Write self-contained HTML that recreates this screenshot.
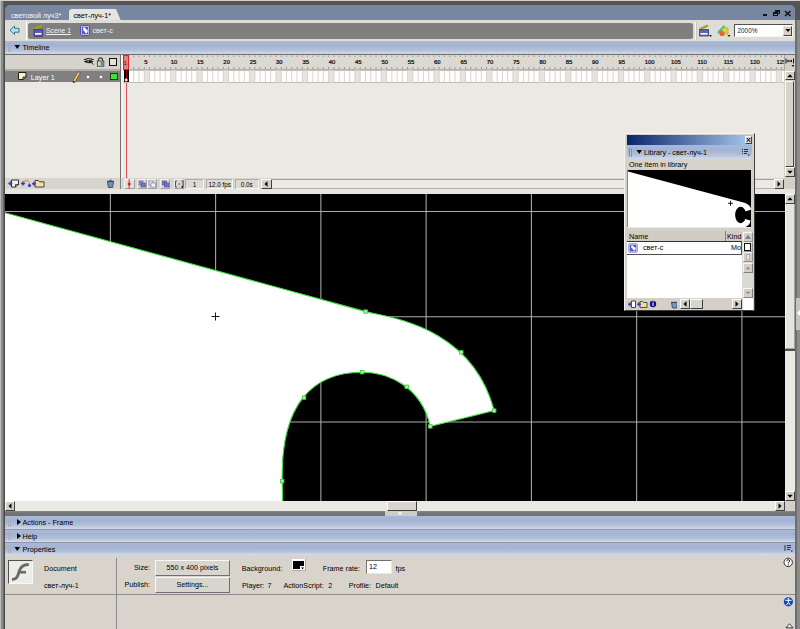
<!DOCTYPE html>
<html><head><meta charset="utf-8">
<style>
*{margin:0;padding:0;box-sizing:border-box}
html,body{width:800px;height:629px;overflow:hidden}
body{position:relative;background:#d4d0c8;font-family:"Liberation Sans",sans-serif;font-size:7.2px;color:#000}
.a{position:absolute}
.t{position:absolute;white-space:nowrap;line-height:10px}
.hdr{position:absolute;background:linear-gradient(#a8b8dc 0%,#a4b3d0 35%,#b2c0d8 70%,#d2dbe9 100%)}
.btn{position:absolute;background:#d4d0c8;border:1px solid;border-color:#fff #404040 #404040 #fff}
</style></head><body>
<div class="a" style="left:1px;top:1px;width:799px;height:628px;background:#555558"></div>
<div class="a" style="left:0px;top:1px;width:5px;height:628px;background:linear-gradient(90deg,#bcbcbc 0px,#bcbcbc 1px,#8c8c8c 1px,#8c8c8c 3px,#686868 3px,#686868 4.5px,#4c4c4c 4.5px)"></div>
<div class="a" style="left:795px;top:20px;width:5px;height:609px;background:linear-gradient(90deg,#6e6e6e 0px,#6e6e6e 2px,#8c8c8c 2px)"></div>
<div class="a" style="left:5px;top:5px;width:790px;height:16px;background:linear-gradient(#7888a0 0%,#7787a2 75%,#7a82ae 100%);border-radius:5px 5px 0 0"></div>
<div class="t" style="left:11px;top:10.7px;color:#f4f6fa">световой луч3*</div>
<div class="a" style="left:69px;top:9px;width:47px;height:12px;background:#e6e4de;border-radius:3px 0 0 0"></div>
<svg class="a" style="left:115px;top:9px" width="7" height="12"><polygon points="0,0 1,0 6,12 0,12" fill="#e6e4de"/></svg>
<div class="t" style="left:73.5px;top:10.7px;">свет-луч-1*</div>
<div class="a" style="left:763px;top:14px;width:4px;height:2px;background:#101010"></div>
<div class="a" style="left:775px;top:10px;width:5px;height:4px;border:1px solid #101010;border-top-width:2px"></div>
<div class="a" style="left:773px;top:12px;width:5px;height:4px;border:1px solid #101010;border-top-width:2px;background:#7a8aa2"></div>
<svg class="a" style="left:784px;top:10px" width="8" height="7"><path d="M1 1 L6.5 6 M6.5 1 L1 6" stroke="#101010" stroke-width="1.6"/></svg>
<div class="a" style="left:5px;top:20px;width:790px;height:21px;background:#dedcd6"></div>
<div class="a" style="left:26px;top:21px;width:1px;height:19px;background:#fff"></div>
<div class="a" style="left:28px;top:23px;width:665px;height:16px;background:#7f7f7f;border-radius:2.5px"></div>
<div class="t" style="left:46px;top:26.3px;color:#f0f0f0;text-decoration:underline;font-size:6.8px">Scene 1</div>
<div class="t" style="left:92.5px;top:26.3px;color:#f0f0f0">свет-с</div>
<div class="a" style="left:694.5px;top:22px;width:1px;height:18px;background:#f4f4f0"></div>
<div class="a" style="left:695.5px;top:22px;width:0.8px;height:18px;background:#c8c6c0"></div>
<svg class="a" style="left:9px;top:25px" width="12" height="11"><path d="M1 5.2 L5.5 1 L5.5 3.3 L10 3.3 L10 7.2 L5.5 7.2 L5.5 9.5 Z" fill="#a8e4f8" stroke="#2a6a80" stroke-width="0.9" stroke-linejoin="round"/></svg>
<svg class="a" style="left:33px;top:24px" width="11" height="14"><path d="M1 5 L9 1.5" stroke="#a0a020" stroke-width="2.2"/><rect x="1" y="5.5" width="8.5" height="7" fill="#5a58a8" stroke="#383878" stroke-width="0.8"/><rect x="2" y="9" width="6.5" height="1.6" fill="#fff"/></svg>
<svg class="a" style="left:80px;top:25px" width="10" height="11"><rect x="0.5" y="0.5" width="9" height="10" rx="1.2" fill="#b8b8f4" stroke="#4848b0" stroke-width="0.9"/><rect x="2" y="2" width="6" height="7" fill="#5858c8"/><path d="M3 2.6H5L6 4.2L7.6 4.8V6.8L6.6 8.2H5.6L4.6 6.4L3.4 5.4Z" fill="#fff"/></svg>
<svg class="a" style="left:698px;top:24px" width="15" height="14"><path d="M2 5 L10 1.5" stroke="#a0a020" stroke-width="2.2"/><rect x="1.5" y="5.5" width="9" height="6.5" fill="#6060b0" stroke="#404080" stroke-width="0.8"/><rect x="2.5" y="9" width="7" height="1.6" fill="#fff"/><path d="M11 11 L14 11 L12.5 13 Z" fill="#222"/></svg>
<svg class="a" style="left:716px;top:24px" width="15" height="14"><path d="M2 9 L8.5 2" stroke="#30c0a0" stroke-width="2.4"/><rect x="6" y="4" width="6" height="6" fill="#e0d830" stroke="#a0a020" stroke-width="0.6"/><circle cx="6" cy="9.5" r="2.6" fill="#f06030"/><path d="M11.5 11 L14.5 11 L13 13 Z" fill="#222"/></svg>
<div class="a" style="left:734px;top:24px;width:59px;height:12.5px;background:#fff;border:1.5px solid;border-color:#505050 #f4f4f0 #f4f4f0 #505050"></div>
<div class="t" style="left:737.5px;top:25.6px;font-size:6.4px;color:#202020">2000%</div>
<div class="btn" style="left:782.5px;top:25.5px;width:9.5px;height:10px;border-color:#e8e8e4 #404040 #404040 #e8e8e4"></div>
<svg class="a" style="left:783px;top:25px" width="10" height="11"><path d="M2.5 4 L7.5 4 L5 7 Z" fill="#000"/></svg>
<div class="hdr" style="left:5px;top:41px;width:790px;height:13px"></div>
<div class="a" style="left:8px;top:43px;width:1px;height:9px;background:#a6aec4"></div>
<div class="a" style="left:10px;top:43px;width:1px;height:9px;background:#a6aec4"></div>
<svg class="a" style="left:14px;top:44px" width="7" height="6"><path d="M0.5 1 L6 1 L3.25 5 Z" fill="#000"/></svg>
<div class="t" style="left:22.5px;top:42.9px;">Timeline</div>
<div class="a" style="left:5px;top:54px;width:790px;height:1px;background:#6d6d6d"></div>
<div class="a" style="left:5px;top:55px;width:115px;height:15px;background:#d6d3cc"></div>
<div class="a" style="left:5px;top:70px;width:115px;height:12px;background:#808080"></div>
<div class="t" style="left:30.8px;top:72.8px;color:#fff">Layer 1</div>
<div class="a" style="left:5px;top:82px;width:115px;height:96px;background:#ebe9e4"></div>
<div class="a" style="left:120px;top:55px;width:1px;height:134px;background:#707070"></div>
<svg class="a" style="left:121px;top:55px" width="662.6" height="28" viewBox="121 55 662.6 28"><rect x="121" y="55" width="664" height="14.5" fill="#dcd9d2"/><rect x="121" y="69" width="664" height="1.5" fill="#b4b2ac"/><rect x="121" y="70.5" width="664" height="12" fill="#fdfdfc"/><g fill="#e6e4df"><rect x="144.27" y="70.5" width="5.27" height="12"/><rect x="170.60" y="70.5" width="5.27" height="12"/><rect x="196.94" y="70.5" width="5.27" height="12"/><rect x="223.27" y="70.5" width="5.27" height="12"/><rect x="249.61" y="70.5" width="5.27" height="12"/><rect x="275.94" y="70.5" width="5.27" height="12"/><rect x="302.28" y="70.5" width="5.27" height="12"/><rect x="328.61" y="70.5" width="5.27" height="12"/><rect x="354.95" y="70.5" width="5.27" height="12"/><rect x="381.28" y="70.5" width="5.27" height="12"/><rect x="407.62" y="70.5" width="5.27" height="12"/><rect x="433.95" y="70.5" width="5.27" height="12"/><rect x="460.29" y="70.5" width="5.27" height="12"/><rect x="486.62" y="70.5" width="5.27" height="12"/><rect x="512.96" y="70.5" width="5.27" height="12"/><rect x="539.29" y="70.5" width="5.27" height="12"/><rect x="565.63" y="70.5" width="5.27" height="12"/><rect x="591.96" y="70.5" width="5.27" height="12"/><rect x="618.30" y="70.5" width="5.27" height="12"/><rect x="644.63" y="70.5" width="5.27" height="12"/><rect x="670.97" y="70.5" width="5.27" height="12"/><rect x="697.30" y="70.5" width="5.27" height="12"/><rect x="723.64" y="70.5" width="5.27" height="12"/><rect x="749.97" y="70.5" width="5.27" height="12"/><rect x="776.31" y="70.5" width="5.27" height="12"/></g><path d="M128.47 70.5V82.5M133.73 70.5V82.5M139.00 70.5V82.5M144.27 70.5V82.5M149.53 70.5V82.5M154.80 70.5V82.5M160.07 70.5V82.5M165.34 70.5V82.5M170.60 70.5V82.5M175.87 70.5V82.5M181.14 70.5V82.5M186.40 70.5V82.5M191.67 70.5V82.5M196.94 70.5V82.5M202.21 70.5V82.5M207.47 70.5V82.5M212.74 70.5V82.5M218.01 70.5V82.5M223.27 70.5V82.5M228.54 70.5V82.5M233.81 70.5V82.5M239.07 70.5V82.5M244.34 70.5V82.5M249.61 70.5V82.5M254.88 70.5V82.5M260.14 70.5V82.5M265.41 70.5V82.5M270.68 70.5V82.5M275.94 70.5V82.5M281.21 70.5V82.5M286.48 70.5V82.5M291.74 70.5V82.5M297.01 70.5V82.5M302.28 70.5V82.5M307.55 70.5V82.5M312.81 70.5V82.5M318.08 70.5V82.5M323.35 70.5V82.5M328.61 70.5V82.5M333.88 70.5V82.5M339.15 70.5V82.5M344.41 70.5V82.5M349.68 70.5V82.5M354.95 70.5V82.5M360.22 70.5V82.5M365.48 70.5V82.5M370.75 70.5V82.5M376.02 70.5V82.5M381.28 70.5V82.5M386.55 70.5V82.5M391.82 70.5V82.5M397.08 70.5V82.5M402.35 70.5V82.5M407.62 70.5V82.5M412.88 70.5V82.5M418.15 70.5V82.5M423.42 70.5V82.5M428.69 70.5V82.5M433.95 70.5V82.5M439.22 70.5V82.5M444.49 70.5V82.5M449.75 70.5V82.5M455.02 70.5V82.5M460.29 70.5V82.5M465.56 70.5V82.5M470.82 70.5V82.5M476.09 70.5V82.5M481.36 70.5V82.5M486.62 70.5V82.5M491.89 70.5V82.5M497.16 70.5V82.5M502.42 70.5V82.5M507.69 70.5V82.5M512.96 70.5V82.5M518.23 70.5V82.5M523.49 70.5V82.5M528.76 70.5V82.5M534.03 70.5V82.5M539.29 70.5V82.5M544.56 70.5V82.5M549.83 70.5V82.5M555.09 70.5V82.5M560.36 70.5V82.5M565.63 70.5V82.5M570.90 70.5V82.5M576.16 70.5V82.5M581.43 70.5V82.5M586.70 70.5V82.5M591.96 70.5V82.5M597.23 70.5V82.5M602.50 70.5V82.5M607.76 70.5V82.5M613.03 70.5V82.5M618.30 70.5V82.5M623.57 70.5V82.5M628.83 70.5V82.5M634.10 70.5V82.5M639.37 70.5V82.5M644.63 70.5V82.5M649.90 70.5V82.5M655.17 70.5V82.5M660.43 70.5V82.5M665.70 70.5V82.5M670.97 70.5V82.5M676.24 70.5V82.5M681.50 70.5V82.5M686.77 70.5V82.5M692.04 70.5V82.5M697.30 70.5V82.5M702.57 70.5V82.5M707.84 70.5V82.5M713.10 70.5V82.5M718.37 70.5V82.5M723.64 70.5V82.5M728.91 70.5V82.5M734.17 70.5V82.5M739.44 70.5V82.5M744.71 70.5V82.5M749.97 70.5V82.5M755.24 70.5V82.5M760.51 70.5V82.5M765.77 70.5V82.5M771.04 70.5V82.5M776.31 70.5V82.5M781.58 70.5V82.5" stroke="#cfcdc7" stroke-width="0.8"/><path d="M128.47 55.5V57M128.47 67V69M133.73 55.5V57M133.73 67V69M139.00 55.5V57M139.00 67V69M144.27 55.5V57M144.27 67V69M149.53 55.5V57M149.53 67V69M154.80 55.5V57M154.80 67V69M160.07 55.5V57M160.07 67V69M165.34 55.5V57M165.34 67V69M170.60 55.5V57M170.60 67V69M175.87 55.5V57M175.87 67V69M181.14 55.5V57M181.14 67V69M186.40 55.5V57M186.40 67V69M191.67 55.5V57M191.67 67V69M196.94 55.5V57M196.94 67V69M202.21 55.5V57M202.21 67V69M207.47 55.5V57M207.47 67V69M212.74 55.5V57M212.74 67V69M218.01 55.5V57M218.01 67V69M223.27 55.5V57M223.27 67V69M228.54 55.5V57M228.54 67V69M233.81 55.5V57M233.81 67V69M239.07 55.5V57M239.07 67V69M244.34 55.5V57M244.34 67V69M249.61 55.5V57M249.61 67V69M254.88 55.5V57M254.88 67V69M260.14 55.5V57M260.14 67V69M265.41 55.5V57M265.41 67V69M270.68 55.5V57M270.68 67V69M275.94 55.5V57M275.94 67V69M281.21 55.5V57M281.21 67V69M286.48 55.5V57M286.48 67V69M291.74 55.5V57M291.74 67V69M297.01 55.5V57M297.01 67V69M302.28 55.5V57M302.28 67V69M307.55 55.5V57M307.55 67V69M312.81 55.5V57M312.81 67V69M318.08 55.5V57M318.08 67V69M323.35 55.5V57M323.35 67V69M328.61 55.5V57M328.61 67V69M333.88 55.5V57M333.88 67V69M339.15 55.5V57M339.15 67V69M344.41 55.5V57M344.41 67V69M349.68 55.5V57M349.68 67V69M354.95 55.5V57M354.95 67V69M360.22 55.5V57M360.22 67V69M365.48 55.5V57M365.48 67V69M370.75 55.5V57M370.75 67V69M376.02 55.5V57M376.02 67V69M381.28 55.5V57M381.28 67V69M386.55 55.5V57M386.55 67V69M391.82 55.5V57M391.82 67V69M397.08 55.5V57M397.08 67V69M402.35 55.5V57M402.35 67V69M407.62 55.5V57M407.62 67V69M412.88 55.5V57M412.88 67V69M418.15 55.5V57M418.15 67V69M423.42 55.5V57M423.42 67V69M428.69 55.5V57M428.69 67V69M433.95 55.5V57M433.95 67V69M439.22 55.5V57M439.22 67V69M444.49 55.5V57M444.49 67V69M449.75 55.5V57M449.75 67V69M455.02 55.5V57M455.02 67V69M460.29 55.5V57M460.29 67V69M465.56 55.5V57M465.56 67V69M470.82 55.5V57M470.82 67V69M476.09 55.5V57M476.09 67V69M481.36 55.5V57M481.36 67V69M486.62 55.5V57M486.62 67V69M491.89 55.5V57M491.89 67V69M497.16 55.5V57M497.16 67V69M502.42 55.5V57M502.42 67V69M507.69 55.5V57M507.69 67V69M512.96 55.5V57M512.96 67V69M518.23 55.5V57M518.23 67V69M523.49 55.5V57M523.49 67V69M528.76 55.5V57M528.76 67V69M534.03 55.5V57M534.03 67V69M539.29 55.5V57M539.29 67V69M544.56 55.5V57M544.56 67V69M549.83 55.5V57M549.83 67V69M555.09 55.5V57M555.09 67V69M560.36 55.5V57M560.36 67V69M565.63 55.5V57M565.63 67V69M570.90 55.5V57M570.90 67V69M576.16 55.5V57M576.16 67V69M581.43 55.5V57M581.43 67V69M586.70 55.5V57M586.70 67V69M591.96 55.5V57M591.96 67V69M597.23 55.5V57M597.23 67V69M602.50 55.5V57M602.50 67V69M607.76 55.5V57M607.76 67V69M613.03 55.5V57M613.03 67V69M618.30 55.5V57M618.30 67V69M623.57 55.5V57M623.57 67V69M628.83 55.5V57M628.83 67V69M634.10 55.5V57M634.10 67V69M639.37 55.5V57M639.37 67V69M644.63 55.5V57M644.63 67V69M649.90 55.5V57M649.90 67V69M655.17 55.5V57M655.17 67V69M660.43 55.5V57M660.43 67V69M665.70 55.5V57M665.70 67V69M670.97 55.5V57M670.97 67V69M676.24 55.5V57M676.24 67V69M681.50 55.5V57M681.50 67V69M686.77 55.5V57M686.77 67V69M692.04 55.5V57M692.04 67V69M697.30 55.5V57M697.30 67V69M702.57 55.5V57M702.57 67V69M707.84 55.5V57M707.84 67V69M713.10 55.5V57M713.10 67V69M718.37 55.5V57M718.37 67V69M723.64 55.5V57M723.64 67V69M728.91 55.5V57M728.91 67V69M734.17 55.5V57M734.17 67V69M739.44 55.5V57M739.44 67V69M744.71 55.5V57M744.71 67V69M749.97 55.5V57M749.97 67V69M755.24 55.5V57M755.24 67V69M760.51 55.5V57M760.51 67V69M765.77 55.5V57M765.77 67V69M771.04 55.5V57M771.04 67V69M776.31 55.5V57M776.31 67V69M781.58 55.5V57M781.58 67V69" stroke="#8a8882" stroke-width="0.8"/><rect x="121" y="82.5" width="664" height="0.6" fill="#d0cec8"/><g font-family="Liberation Sans" font-size="5.9" fill="#101010" stroke="#101010" stroke-width="0.25"><text x="144.37" y="64.4">5</text><text x="170.70" y="64.4">10</text><text x="197.04" y="64.4">15</text><text x="223.37" y="64.4">20</text><text x="249.71" y="64.4">25</text><text x="276.04" y="64.4">30</text><text x="302.38" y="64.4">35</text><text x="328.71" y="64.4">40</text><text x="355.05" y="64.4">45</text><text x="381.38" y="64.4">50</text><text x="407.72" y="64.4">55</text><text x="434.05" y="64.4">60</text><text x="460.39" y="64.4">65</text><text x="486.72" y="64.4">70</text><text x="513.06" y="64.4">75</text><text x="539.39" y="64.4">80</text><text x="565.73" y="64.4">85</text><text x="592.06" y="64.4">90</text><text x="618.40" y="64.4">95</text><text x="644.73" y="64.4">100</text><text x="671.07" y="64.4">105</text><text x="697.40" y="64.4">110</text><text x="723.74" y="64.4">115</text><text x="750.07" y="64.4">120</text><text x="776.41" y="64.4">125</text></g></svg>
<div class="a" style="left:121px;top:83px;width:664px;height:95px;background:#ebe9e4"></div>
<div class="a" style="left:5px;top:69px;width:115px;height:1.5px;background:#b0aea8"></div>
<svg class="a" style="left:83px;top:57px" width="12" height="9"><path d="M0.8 2.8 Q5 0.2 10.8 2.6" stroke="#111" stroke-width="1" fill="none"/><path d="M0.8 4.6 Q5.5 1.4 10.6 4.4 Q6 8 0.8 4.6 Z" fill="#151515"/><circle cx="5.2" cy="4.4" r="1" fill="#888"/><path d="M8.6 5.6 L10.4 7.6" stroke="#111" stroke-width="1"/></svg>
<svg class="a" style="left:96px;top:56px" width="9" height="11"><path d="M2.5 5 V3 Q4.5 0.8 6.5 3 V5" stroke="#333" stroke-width="1.1" fill="none"/><rect x="1.3" y="5" width="6.5" height="5.2" fill="#d8e0a0" stroke="#303040" stroke-width="0.8"/><rect x="4.5" y="5.6" width="2.8" height="4" fill="#6a8ac0"/></svg>
<div class="a" style="left:109px;top:58px;width:8px;height:8px;border:1.6px solid #111;background:#e4e2dc"></div>
<svg class="a" style="left:17px;top:71px" width="11" height="10"><path d="M1.5 1.5 H9 V6 L6 8.5 H1.5 Z" fill="#f4f4d8" stroke="#202010" stroke-width="1"/><path d="M6 8.5 V6 H9" stroke="#202010" stroke-width="0.9" fill="none"/></svg>
<svg class="a" style="left:72px;top:71px" width="9" height="12"><path d="M2 10.5 L7 2" stroke="#7a3a80" stroke-width="3" stroke-linecap="round"/><path d="M2.2 10 L6.6 2.5" stroke="#f0e020" stroke-width="1.6"/><path d="M6.2 3.2 L7.2 1.5" stroke="#f0b0c0" stroke-width="1.5"/><path d="M1.4 11.2 L2 10" stroke="#333" stroke-width="1"/></svg>
<svg class="a" style="left:86px;top:75px" width="4" height="4"><circle cx="2" cy="2" r="1.3" fill="#fff"/></svg>
<svg class="a" style="left:98.5px;top:75px" width="4" height="4"><circle cx="2" cy="2" r="1.3" fill="#fff"/></svg>
<div class="a" style="left:110px;top:73px;width:7.5px;height:7px;background:#40e040;border:1px solid #104010"></div>
<div class="a" style="left:121px;top:55px;width:1.5px;height:134px;background:#f4f2ee"></div>
<div class="a" style="left:123px;top:55px;width:6px;height:15px;background:#f07a7a;border:1px solid #e02020"></div>
<div class="t" style="left:123.6px;top:57.5px;font-size:6px;color:#301010">1</div>
<div class="a" style="left:123.6px;top:70.4px;width:5px;height:12px;background:#000"></div>
<div class="a" style="left:126px;top:70.4px;width:1px;height:12px;background:#900"></div>
<svg class="a" style="left:124px;top:77.5px" width="5" height="5"><circle cx="2.2" cy="2" r="1.4" fill="#fff" stroke="#e06060" stroke-width="0.5"/></svg>
<div class="a" style="left:125.8px;top:82.5px;width:1px;height:96px;background:#e05050"></div>
<div class="a" style="left:784px;top:55px;width:11px;height:134px;background:#d4d0c8"></div>
<div class="a" style="left:783.5px;top:55px;width:0.8px;height:15px;background:#a8a6a0"></div>
<svg class="a" style="left:785px;top:57px" width="10" height="11"><path d="M1 1.5V6.5M8.5 1.5V6.5M2.5 4H7" stroke="#111" stroke-width="1"/><path d="M2.5 2.5L4 4L2.5 5.5ZM7 2.5L5.5 4L7 5.5Z" fill="#111"/><path d="M6.5 8L9.5 8L8 10Z" fill="#111"/></svg>
<div class="btn" style="left:784.5px;top:70.5px;width:10px;height:9.5px;"></div>
<svg class="a" style="left:784.5px;top:70.5px" width="10" height="10"><path d="M2.3 6.3H7.7L5 3.3Z" fill="#000"/></svg>
<div class="btn" style="left:784.5px;top:80.5px;width:9px;height:86px;background:#d6d3cc"></div>
<div class="btn" style="left:784.5px;top:167px;width:10px;height:10px;"></div>
<svg class="a" style="left:784.5px;top:167px" width="10" height="10"><path d="M2.3 3.7H7.7L5 6.7Z" fill="#000"/></svg>
<div class="a" style="left:5px;top:178px;width:790px;height:11px;background:#d8d5ce"></div>
<div class="a" style="left:5px;top:189px;width:790px;height:4.5px;background:#e8e6e0"></div>
<div class="a" style="left:120px;top:178px;width:1px;height:11px;background:#808080"></div>
<svg class="a" style="left:7px;top:178px" width="40" height="11"><path d="M4.5 2H11.5V6.5L8.5 9H4.5Z" fill="#f0f0dc" stroke="#222" stroke-width="0.9"/><path d="M8.5 9V6.5H11.5" stroke="#222" stroke-width="0.8" fill="none"/><path d="M1.3 5.5H5.3M3.3 3.5V7.5" stroke="#4040c0" stroke-width="1.5"/><path d="M14 5.5H18M16 3.5V7.5" stroke="#3838b8" stroke-width="1.5"/><path d="M17.5 4 Q20.5 -0.5 22.5 6" stroke="#e02020" stroke-width="1" stroke-dasharray="1 0.8" fill="none"/><circle cx="22.5" cy="7.5" r="1.6" fill="#2040c0"/><path d="M28 2.5H31.5L32.5 3.8H37V9H28Z" fill="#f0e0a0" stroke="#333" stroke-width="0.9"/><path d="M25 5.8H29M27 3.8V7.8" stroke="#4040c0" stroke-width="1.5"/></svg>
<svg class="a" style="left:106px;top:179px" width="9" height="9"><path d="M1.5 2.5H7.5L6.6 8.5H2.4Z" fill="#6a90c0" stroke="#304060" stroke-width="0.8"/><path d="M1 2.3H8M3.3 1.2H5.7" stroke="#304060" stroke-width="0.9"/></svg>
<div class="btn" style="left:124px;top:178.5px;width:10.5px;height:10px;background:#e2e0da;border-color:#f4f4f0 #a0a0a0 #a0a0a0 #f4f4f0"></div>
<svg class="a" style="left:124px;top:178.5px" width="11" height="10"><path d="M5.2 0V10" stroke="#e02020" stroke-width="0.9"/><path d="M5.2 3L7 5L5.2 7L3.4 5Z" fill="#e02020"/></svg>
<div class="btn" style="left:136.5px;top:178.5px;width:10px;height:10px;background:#d8d5ce;border-color:#f0f0ec #a0a0a0 #a0a0a0 #f0f0ec"></div>
<div class="btn" style="left:146.5px;top:178.5px;width:10px;height:10px;background:#d8d5ce;border-color:#f0f0ec #a0a0a0 #a0a0a0 #f0f0ec"></div>
<div class="btn" style="left:160px;top:178.5px;width:10px;height:10px;background:#d8d5ce;border-color:#f0f0ec #a0a0a0 #a0a0a0 #f0f0ec"></div>
<div class="btn" style="left:173.5px;top:178.5px;width:10px;height:10px;background:#d8d5ce;border-color:#f0f0ec #a0a0a0 #a0a0a0 #f0f0ec"></div>
<svg class="a" style="left:136.5px;top:178.5px" width="48" height="10"><rect x="2" y="2" width="4" height="4" fill="#9090d8" stroke="#6060b0" stroke-width="0.6"/><rect x="4" y="4" width="4.5" height="4" fill="#7070c8" stroke="#5050a0" stroke-width="0.6"/><rect x="12" y="2" width="4" height="4" fill="#e8e8f8" stroke="#8080c0" stroke-width="0.7"/><rect x="14" y="4" width="4.5" height="4" fill="#f4f4ff" stroke="#8080c0" stroke-width="0.7"/><rect x="25.5" y="2" width="4" height="4" fill="#7070c8" stroke="#5050a0" stroke-width="0.6"/><rect x="27.5" y="4" width="4.5" height="4" fill="#7070c8" stroke="#5050a0" stroke-width="0.6"/><path d="M40 2H38.5V8H40M44.5 2H46V8H44.5" stroke="#404060" stroke-width="0.9" fill="none"/><circle cx="42.2" cy="5" r="0.7" fill="#404060"/><path d="M44 7.5L46 7.5L46 9.5Z" fill="#000"/></svg>
<div class="a" style="left:185px;top:178.5px;width:19px;height:10px;background:#dcdad4;border:1px solid;border-color:#b0aea8 #f4f4f0 #f4f4f0 #b0aea8"></div>
<div class="t" style="left:185px;top:179.8px;width:19px;text-align:center;font-size:6.4px">1</div>
<div class="a" style="left:206px;top:178.5px;width:27px;height:10px;background:#dcdad4;border:1px solid;border-color:#b0aea8 #f4f4f0 #f4f4f0 #b0aea8"></div>
<div class="t" style="left:208.6px;top:179.8px;font-size:6.3px">12.0 fps</div>
<div class="a" style="left:235px;top:178.5px;width:23.5px;height:10px;background:#dcdad4;border:1px solid;border-color:#b0aea8 #f4f4f0 #f4f4f0 #b0aea8"></div>
<div class="t" style="left:240.7px;top:179.8px;font-size:6.3px">0.0s</div>
<div class="btn" style="left:261px;top:178.5px;width:10.5px;height:10px;"></div>
<svg class="a" style="left:261px;top:178.5px" width="10" height="10"><path d="M6.5 2.3V7.7L3.5 5Z" fill="#000"/></svg>
<div class="a" style="left:271.5px;top:178.5px;width:502px;height:10.5px;background:#ebe9e5;border-top:1px solid #a4a29c;border-bottom:1px solid #b4b2ac"></div>
<div class="btn" style="left:773.5px;top:178.5px;width:10.5px;height:10px;"></div>
<svg class="a" style="left:773.5px;top:178.5px" width="10" height="10"><path d="M3.5 2.3V7.7L6.5 5Z" fill="#000"/></svg>
<div class="a" style="left:784px;top:178px;width:11px;height:11px;background:#d4d0c8"></div>
<svg class="a" style="left:5px;top:194px" width="780" height="307" viewBox="5 194 780 307"><rect x="5" y="194" width="780" height="307" fill="#000"/><path d="M110.35 194V501M215.61 194V501M320.87 194V501M426.13 194V501M531.39 194V501M636.65 194V501M741.91 194V501M5 211.50H785M5 316.76H785M5 422.02H785" stroke="#acacac" stroke-width="1.05"/><path d="M 0 211.4 L 365.6 311.6 C 386.3 317.3 471.3 324.5 494.2 410.6 L 430.3 426.4 C 421.4 386.5 387.85 372.2 362.2 372.2 C 312.5 372.2 280.75 403.9 282.2 481.1 L 282.7 510 L 0 510 Z" fill="#fff" stroke="#40e040" stroke-width="1.15"/><path d="M211.5 316.5H219.5M215.5 312.5V320.5" stroke="#000" stroke-width="0.9"/><rect x="363.90000000000003" y="309.90000000000003" width="3.4" height="3.4" fill="#b8f0b8" stroke="#40d040" stroke-width="0.9"/><rect x="459.6" y="350.6" width="3.4" height="3.4" fill="#b8f0b8" stroke="#40d040" stroke-width="0.9"/><rect x="492.5" y="408.90000000000003" width="3.4" height="3.4" fill="#b8f0b8" stroke="#40d040" stroke-width="0.9"/><rect x="428.6" y="424.7" width="3.4" height="3.4" fill="#b8f0b8" stroke="#40d040" stroke-width="0.9"/><rect x="405.0" y="385.1" width="3.4" height="3.4" fill="#b8f0b8" stroke="#40d040" stroke-width="0.9"/><rect x="360.5" y="370.5" width="3.4" height="3.4" fill="#b8f0b8" stroke="#40d040" stroke-width="0.9"/><rect x="302.40000000000003" y="395.90000000000003" width="3.4" height="3.4" fill="#b8f0b8" stroke="#40d040" stroke-width="0.9"/><rect x="280.5" y="479.40000000000003" width="3.4" height="3.4" fill="#b8f0b8" stroke="#40d040" stroke-width="0.9"/></svg>
<div class="a" style="left:785px;top:194px;width:10px;height:307px;background:#ebe9e4"></div>
<div class="a" style="left:5px;top:500.5px;width:790px;height:10.5px;background:#ebe9e4"></div>
<div class="btn" style="left:785px;top:194px;width:10px;height:10px;"></div>
<svg class="a" style="left:785px;top:194px" width="10" height="10"><path d="M2.3 6.3H7.7L5 3.3Z" fill="#000"/></svg>
<div class="a" style="left:785px;top:204px;width:10px;height:145px;background:#e6e4de;border-left:1px solid #fafaf8;border-right:1px solid #a0a0a0;border-bottom:1px solid #a0a0a0"></div>
<div class="a" style="left:785px;top:349px;width:10px;height:1.5px;background:#505050"></div>
<div class="a" style="left:795.5px;top:298px;width:4.5px;height:32px;background:#c4c4c4"></div>
<svg class="a" style="left:795.5px;top:308px" width="5" height="10"><path d="M4 2V8L1 5Z" fill="#fff"/></svg>
<div class="btn" style="left:785px;top:490.5px;width:10px;height:10px;"></div>
<svg class="a" style="left:785px;top:490.5px" width="10" height="10"><path d="M2.3 3.7H7.7L5 6.7Z" fill="#000"/></svg>
<div class="btn" style="left:5px;top:500.5px;width:10px;height:10.5px;"></div>
<svg class="a" style="left:5px;top:500.5px" width="10" height="10"><path d="M6.5 2.3V7.7L3.5 5Z" fill="#000"/></svg>
<div class="btn" style="left:775px;top:500.5px;width:10px;height:10.5px;"></div>
<svg class="a" style="left:775px;top:500.5px" width="10" height="10"><path d="M3.5 2.3V7.7L6.5 5Z" fill="#000"/></svg>
<div class="btn" style="left:386.5px;top:500.5px;width:30px;height:10.5px;background:#d8d5ce"></div>
<div class="a" style="left:785px;top:500.5px;width:10px;height:10.5px;background:#d4d0c8"></div>
<div class="a" style="left:5px;top:511px;width:790px;height:5px;background:linear-gradient(#8a8a8a,#747474 40%,#707070)"></div>
<div class="a" style="left:385px;top:511px;width:32px;height:5px;background:#cfcdc8"></div>
<svg class="a" style="left:396px;top:512px" width="8" height="4"><path d="M1.5 0.5H6.5L4 3Z" fill="#fff"/></svg>
<div class="hdr" style="left:5px;top:516px;width:790px;height:13px"></div>
<div class="a" style="left:8px;top:518px;width:1px;height:9px;background:#a6aec4"></div>
<div class="a" style="left:10px;top:518px;width:1px;height:9px;background:#a6aec4"></div>
<svg class="a" style="left:16px;top:518px" width="6" height="8"><path d="M1 1 L5 4 L1 7 Z" fill="#000"/></svg>
<div class="t" style="left:22.5px;top:517.9px;">Actions - Frame</div>
<div class="a" style="left:5px;top:529px;width:790px;height:1px;background:#8e96a8"></div>
<div class="hdr" style="left:5px;top:530px;width:790px;height:12px"></div>
<div class="a" style="left:8px;top:532px;width:1px;height:8px;background:#a6aec4"></div>
<div class="a" style="left:10px;top:532px;width:1px;height:8px;background:#a6aec4"></div>
<svg class="a" style="left:16px;top:532px" width="6" height="8"><path d="M1 1 L5 4 L1 7 Z" fill="#000"/></svg>
<div class="t" style="left:22.5px;top:531.9px;">Help</div>
<div class="a" style="left:5px;top:542px;width:790px;height:1px;background:#8e96a8"></div>
<div class="hdr" style="left:5px;top:543px;width:790px;height:12px"></div>
<div class="a" style="left:8px;top:545px;width:1px;height:8px;background:#a6aec4"></div>
<div class="a" style="left:10px;top:545px;width:1px;height:8px;background:#a6aec4"></div>
<svg class="a" style="left:14px;top:546px" width="7" height="6"><path d="M0.5 1 L6 1 L3.25 5 Z" fill="#000"/></svg>
<div class="t" style="left:22.5px;top:544.9px;">Properties</div>
<svg class="a" style="left:784px;top:544px" width="10" height="9"><path d="M1 1 L1 7 M3 1.5 L7 1.5 M3 3.5 L7 3.5 M3 5.5 L6 5.5" stroke="#202040" stroke-width="0.9"/><path d="M6.5 6.5 L9 6.5 L7.75 8 Z" fill="#202040"/></svg>
<div class="a" style="left:5px;top:555px;width:790px;height:74px;background:#d8d4cc"></div>
<div class="a" style="left:5px;top:594px;width:790px;height:1px;background:#8a8a8a"></div>
<div class="a" style="left:116px;top:558px;width:1px;height:71px;background:#8a8a8a"></div>
<div class="t" style="left:44px;top:563.7px;">Document</div>
<div class="t" style="left:44px;top:581px;">свет-луч-1</div>
<div class="a" style="left:8px;top:560px;width:24.5px;height:24px;background:#ececea;border:1px solid;border-color:#505050 #f8f8f8 #f8f8f8 #505050"></div>
<svg class="a" style="left:8px;top:560px" width="25" height="24"><path d="M4 19.6 C9.5 19.6 10 15 11.3 11 C12.8 6.5 15.5 4.6 20.8 4.6" stroke="#6a6a6a" stroke-width="3" fill="none"/><path d="M10.8 12.2H18" stroke="#6a6a6a" stroke-width="2.6"/></svg>
<div class="t" style="left:116px;top:563.3px;width:34px;text-align:right">Size:</div>
<div class="t" style="left:116px;top:580.3px;width:34px;text-align:right">Publish:</div>
<div class="btn" style="left:155px;top:560px;width:75px;height:15.5px;background:#d8d5ce;border-color:#f8f8f4 #707070 #707070 #f8f8f4"></div>
<div class="t" style="left:155px;top:563.3px;width:75px;text-align:center">550 x 400 pixels</div>
<div class="btn" style="left:155px;top:577px;width:75px;height:15.5px;background:#d8d5ce;border-color:#f8f8f4 #707070 #707070 #f8f8f4"></div>
<div class="t" style="left:155px;top:580.3px;width:75px;text-align:center">Settings...</div>
<div class="t" style="left:241.8px;top:564px;">Background:</div>
<div class="a" style="left:291.7px;top:558.9px;width:13.4px;height:11.6px;background:#fff;box-shadow:0.6px 0.6px 0 0.3px #a8a8a8"></div>
<div class="a" style="left:293.2px;top:560.5px;width:10.5px;height:8.3px;background:#000"></div>
<div class="a" style="left:300.3px;top:566.3px;width:3.6px;height:2.8px;background:#fff"></div>
<svg class="a" style="left:288px;top:556px" width="22" height="18"><path d="M13 11.6H16.2L14.6 13.3Z" fill="#000"/></svg>
<div class="t" style="left:322.8px;top:564px;">Frame rate:</div>
<div class="a" style="left:366px;top:559.5px;width:25.5px;height:14px;background:#fff;border:1px solid;border-color:#707070 #e8e8e8 #e8e8e8 #707070"></div>
<div class="t" style="left:369px;top:561.5px;">12</div>
<div class="t" style="left:395.4px;top:564px;">fps</div>
<div class="t" style="left:242px;top:581px;word-spacing:1.2px">Player: 7</div>
<div class="t" style="left:283.4px;top:581px;word-spacing:2.4px">ActionScript: 2</div>
<div class="t" style="left:348.7px;top:581px;word-spacing:2.4px">Profile: Default</div>
<svg class="a" style="left:782px;top:556px" width="12" height="12"><circle cx="6.2" cy="6.4" r="4.2" fill="#fff" stroke="#202020" stroke-width="0.9"/><path d="M4.8 5.2 Q4.8 3.6 6.2 3.6 Q7.6 3.6 7.6 5 Q7.6 6 6.3 6.6 V7.5" stroke="#202020" stroke-width="1" fill="none"/><circle cx="6.3" cy="8.9" r="0.6" fill="#202020"/></svg>
<svg class="a" style="left:782px;top:595px" width="12" height="13"><circle cx="6.4" cy="6.8" r="4.6" fill="#1048c0"/><circle cx="6.4" cy="3.9" r="0.9" fill="#fff"/><path d="M3.2 5.3H9.6M6.4 5V7.4L4.6 10M6.4 7.4L8.2 10" stroke="#fff" stroke-width="1" fill="none"/></svg>
<svg class="a" style="left:784px;top:621px" width="12" height="8"><path d="M2 6.8H9L5.5 2.8Z" fill="#fff" stroke="#202020" stroke-width="0.9"/></svg>
<div class="a" style="left:624px;top:133px;width:131px;height:178px;background:#d4d0c8;border:1px solid;border-color:#f4f4f0 #404040 #404040 #f4f4f0"></div>
<div class="a" style="left:627px;top:135px;width:125px;height:10px;background:linear-gradient(90deg,#0a246a,#a6caf0)"></div>
<div class="btn" style="left:745px;top:136px;width:7px;height:8px;"></div>
<svg class="a" style="left:745px;top:136px" width="7" height="8"><path d="M1.8 2 L5.2 5.8 M5.2 2 L1.8 5.8" stroke="#000" stroke-width="1"/></svg>
<div class="hdr" style="left:627px;top:145px;width:125px;height:14px"></div>
<div class="a" style="left:629px;top:148px;width:1px;height:9px;background:#8890a8"></div>
<div class="a" style="left:631px;top:148px;width:1px;height:9px;background:#8890a8"></div>
<svg class="a" style="left:636px;top:149px" width="7" height="6"><path d="M0.5 1 L6 1 L3.25 5 Z" fill="#000"/></svg>
<svg class="a" style="left:741px;top:148px" width="10" height="9"><path d="M1 1.5 L2 1.5 M1 3.5 L2 3.5 M1 5.5 L2 5.5 M3 1.5 L7 1.5 M3 3.5 L7 3.5 M3 5.5 L6 5.5" stroke="#202040" stroke-width="0.9"/><path d="M6.5 6.5 L9 6.5 L7.75 8 Z" fill="#202040"/></svg>
<div class="t" style="left:644px;top:147.8px;">Library - свет-луч-1</div>
<div class="a" style="left:627px;top:159px;width:125px;height:11px;background:#d6d3cc"></div>
<div class="t" style="left:629px;top:159.8px;">One item in library</div>
<svg class="a" style="left:627px;top:170px" width="124" height="57" viewBox="627 170 124 57"><rect x="627" y="170" width="124" height="57" fill="#000"/><path d="M 627 171.2 L 743.5 202.6 C 748 204 751 206 751 210 L 751 227 L 627 227 Z" fill="#fff"/><ellipse cx="740.6" cy="215" rx="5.5" ry="8.2" fill="#000"/><path d="M 745 211.5 L 751 209.8 L 751 227 L 745.5 227 Q 750 225 750.5 220.5 L 745 219 Z" fill="#000"/><path d="M728 203.3H733M730.5 200.8V205.8" stroke="#000" stroke-width="0.9"/></svg>
<div class="a" style="left:627px;top:170px;width:1.3px;height:57px;background:#888"></div>
<div class="a" style="left:627px;top:226.5px;width:124px;height:0.8px;background:#e8e8e8"></div>
<div class="a" style="left:627px;top:231px;width:98px;height:10px;background:#d0ccc4"></div>
<div class="t" style="left:629px;top:231.5px;">Name</div>
<div class="a" style="left:725px;top:231px;width:17px;height:10px;background:#d0ccc4;border-left:1px solid #808080"></div>
<div class="t" style="left:727px;top:231.5px;">Kind</div>
<div class="a" style="left:627px;top:241px;width:115px;height:57px;background:#fff"></div>
<div class="t" style="left:643px;top:243.3px;">свет-с</div>
<div class="t" style="left:731px;top:243.3px;overflow:hidden;width:11px">Movie</div>
<div class="a" style="left:742px;top:231px;width:11px;height:79px;background:#dcdad4"></div>
<div class="btn" style="left:742.5px;top:231.5px;width:10px;height:10px;background:#d4d0c8;border-color:#f4f4f0 #909090 #909090 #f4f4f0"></div>
<svg class="a" style="left:742.5px;top:231.5px" width="10" height="10"><path d="M2 7H8L5 2.5Z" fill="#808080"/></svg>
<div class="btn" style="left:742.5px;top:242px;width:10px;height:9.5px;background:#d4d0c8;border-color:#f4f4f0 #909090 #909090 #f4f4f0"></div>
<div class="a" style="left:744px;top:243.2px;width:7.4px;height:7.4px;border:1.4px solid #111;background:#fff"></div>
<div class="btn" style="left:742.5px;top:252px;width:10px;height:10px;background:#d4d0c8;border-color:#f4f4f0 #909090 #909090 #f4f4f0"></div>
<svg class="a" style="left:742.5px;top:252px" width="10" height="10"><path d="M3.3 2.5H6.7V8H3.3Z" fill="#e8e6e0" stroke="#a0a0a0" stroke-width="0.8"/></svg>
<div class="btn" style="left:742.5px;top:263px;width:10px;height:10px;background:#d4d0c8;border-color:#f4f4f0 #808080 #808080 #f4f4f0"></div>
<svg class="a" style="left:742.5px;top:263px" width="10" height="10"><path d="M2.5 6.2H7.5L5 3.8Z" fill="#909090"/></svg>
<div class="btn" style="left:742.5px;top:287.5px;width:10px;height:10px;background:#d4d0c8;border-color:#f4f4f0 #808080 #808080 #f4f4f0"></div>
<svg class="a" style="left:742.5px;top:287.5px" width="10" height="10"><path d="M2.5 3.8H7.5L5 6.2Z" fill="#909090"/></svg>
<div class="a" style="left:627px;top:241px;width:115px;height:1.2px;background:#303030"></div>
<div class="a" style="left:627px;top:253.6px;width:115px;height:0.9px;background:#505050"></div>
<div class="a" style="left:741.2px;top:241px;width:0.9px;height:13.5px;background:#505050"></div>
<svg class="a" style="left:628px;top:243px" width="10" height="10"><rect x="0.5" y="0.5" width="9" height="9" rx="1.6" fill="#b8b8f4" stroke="#9898e0" stroke-width="0.8"/><rect x="2" y="2" width="6" height="6" fill="#5454c4"/><path d="M3 2.6H5L6 4L7.6 4.6V6.2L6.6 7.4H5.6L4.6 5.8L3.4 5Z" fill="#fff"/></svg>
<div class="a" style="left:627px;top:298px;width:126px;height:12px;background:#d4d0c8"></div>
<svg class="a" style="left:627px;top:298px" width="50" height="12"><path d="M4.5 3H8.5V9.5H4.5Z" fill="#fff" stroke="#333" stroke-width="0.9"/><path d="M1 6.3H5M3 4.3V8.3" stroke="#4040c0" stroke-width="1.5"/><path d="M13 3.5H15.5L16.5 4.5H20V9.5H13Z" fill="#f0e090" stroke="#444" stroke-width="0.9"/><path d="M10 6.3H14M12 4.3V8.3" stroke="#4040c0" stroke-width="1.5"/><circle cx="26" cy="6" r="3.2" fill="#10108a"/><path d="M26 5V8" stroke="#fff" stroke-width="1"/><circle cx="26.2" cy="3.9" r="0.55" fill="#fff"/><path d="M44.5 4.5H50.5L49.6 10H45.4Z" fill="#7098c8" stroke="#304060" stroke-width="0.8"/><path d="M44 4.3H51" stroke="#304060" stroke-width="0.9"/></svg>
<div class="btn" style="left:680px;top:298.5px;width:10px;height:10.5px;"></div>
<svg class="a" style="left:680px;top:298.5px" width="10" height="10"><path d="M6.5 2.3V7.7L3.5 5Z" fill="#000"/></svg>
<div class="btn" style="left:690px;top:298.5px;width:12.5px;height:10.5px;background:#d8d5ce"></div>
<div class="btn" style="left:732px;top:298.5px;width:10px;height:10.5px;"></div>
<svg class="a" style="left:732px;top:298.5px" width="10" height="10"><path d="M3.5 2.3V7.7L6.5 5Z" fill="#000"/></svg>
<div class="a" style="left:742.5px;top:298px;width:10.5px;height:12px;background:#fff"></div>
</body></html>
